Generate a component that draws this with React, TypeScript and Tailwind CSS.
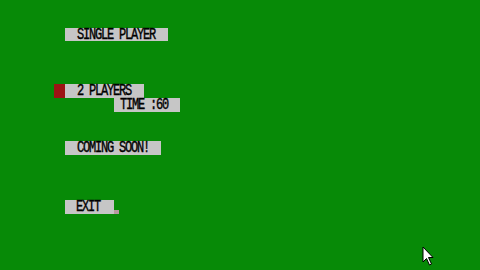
import React from 'react';

const boxText = "font-['Liberation_Mono',monospace] text-[12px] leading-none tracking-[-1.2px] text-black";

const Label = ({ children }: { children: React.ReactNode }) => (
  <span className="inline-block scale-y-[1.3] [-webkit-text-stroke:0.3px_currentColor]">{children}</span>
);

const MenuBox = ({ label, width, className = '' }: { label: string; width: string; className?: string }) => (
  <div className={`${width} h-[13px] bg-[#c6c6c6] flex items-center pl-[12px] ${boxText} ${className}`}>
    <Label>{label}</Label>
  </div>
);

const App = () => {
  return (
    <div className="relative w-[480px] h-[270px] bg-[#078a07] overflow-hidden">
      <div className="flex flex-col pl-[65px] pt-[28px]">
        <MenuBox label="SINGLE PLAYER" width="w-[103px]" />

        {/* 2 players + time */}
        <div className="flex flex-col mt-[43px]">
          <div className="flex items-center ml-[-11px]">
            <div className="w-[11px] h-[14px] bg-[#9c1414]" />
            <div className={`w-[79px] h-[14px] bg-[#c6c6c6] flex items-center pl-[12px] ${boxText}`}>
              <Label>2 PLAYERS</Label>
            </div>
          </div>
          <div className={`ml-[49px] w-[66px] h-[14px] bg-[#c6c6c6] flex items-center pl-[6px] ${boxText}`}>
            <Label>TIME :60</Label>
          </div>
        </div>

        <MenuBox label="COMING SOON!" width="w-[96px]" className="mt-[29px] h-[14px]" />

        <div className="flex items-end mt-[45px]">
          <div className={`w-[49px] h-[14px] bg-[#c6c6c6] flex items-center pl-[11px] ${boxText} text-[#8a1224]`}>
            <Label>EXIT</Label>
          </div>
          <div className="w-[5px] h-[4px] bg-[#b898a0]" />
        </div>
      </div>

      {/* mouse cursor */}
      <svg className="absolute left-[422px] top-[246px]" width="12" height="20" viewBox="0 0 12 20">
        <path d="M1 1 L1 16 L4.5 12.5 L7.5 19 L9.5 18 L6.5 11.5 L11 11.5 Z" fill="#fff" stroke="#000" strokeWidth="1" />
      </svg>
    </div>
  );
};

export default App;
